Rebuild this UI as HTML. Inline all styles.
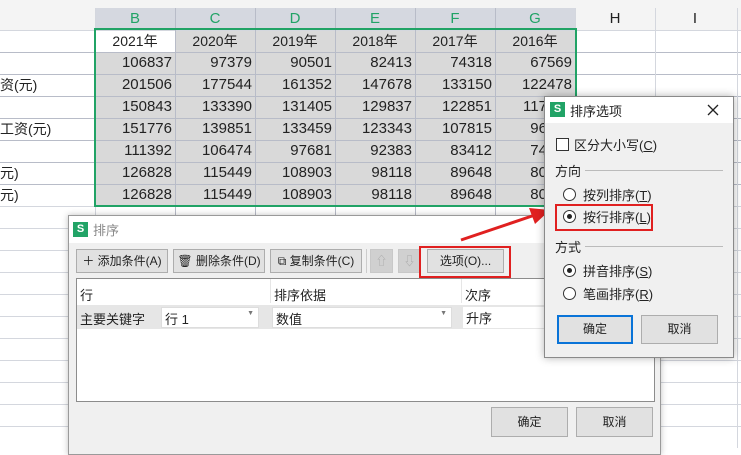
<!DOCTYPE html>
<html><head><meta charset="utf-8"><style>
*{box-sizing:border-box;margin:0;padding:0}
body{width:741px;height:447px;overflow:hidden;background:#fff;position:relative;font-family:"Liberation Sans","Noto Sans CJK SC",sans-serif;font-size:13px;color:#222}
.a{position:absolute}
.hl{position:absolute;height:1px;background:#d4d7de}
.vl{position:absolute;width:1px;background:#d4d7de}
.cell{position:absolute;height:22px;line-height:22px;font-size:15px;text-align:right;padding-right:3px;color:#222}
.btn{position:absolute;background:#e1e1e1;border:1px solid #adadad;text-align:center;font-size:12px}
.rad{position:absolute;width:13px;height:13px;border:1px solid #333;border-radius:50%;background:#fff}
.rad.on::after{content:"";position:absolute;left:3px;top:3px;width:5px;height:5px;border-radius:50%;background:#222}
</style></head><body>
<div class="a" style="left:0;top:0;width:741px;height:8px;background:#f4f4f4"></div>
<div class="a" style="left:0;top:8px;width:741px;height:22px;background:#f4f4f4"></div>
<div class="a" style="left:95px;top:8px;width:480px;height:22px;background:#d5d8e0"></div>
<div class="a" style="left:95px;top:30px;width:480px;height:176px;background:#d9d9d9"></div>
<div class="a" style="left:95px;top:30px;width:80px;height:22px;background:#fff"></div>
<div id="grid"></div>
<script>
var g='';
for(var y=30;y<=447;y+=22)g+='<div class="hl" style="left:0;top:'+y+'px;width:741px;background:'+(y>30&&y<206?'#b8bcc8':'#d4d7de')+'"></div>';
[95,175,255,335,415,495,575,655,737].forEach(function(x){g+='<div class="vl" style="left:'+x+'px;top:8px;height:440px;background:'+(x>95&&x<575?'#b8bcc8':'#d4d7de')+'"></div>'});
var L=['B','C','D','E','F','G','H','I'];
L.forEach(function(l,i){g+='<div class="a" style="left:'+(95+i*80)+'px;top:8px;width:80px;text-align:center;line-height:22px;font-size:15px;color:'+(i<6?'#21a366':'#222')+'">'+l+'</div>'});
var yrs=['2021年','2020年','2019年','2018年','2017年','2016年'];
yrs.forEach(function(t,i){g+='<div class="a" style="left:'+(95+i*80)+'px;top:30px;width:80px;text-align:center;line-height:22px;font-size:14px">'+t+'</div>'});
var d=[[106837,97379,90501,82413,74318,67569],[201506,177544,161352,147678,133150,122478],[150843,133390,131405,129837,122851,117000],[151776,139851,133459,123343,107815,96000],[111392,106474,97681,92383,83412,74000],[126828,115449,108903,98118,89648,80000],[126828,115449,108903,98118,89648,80000]];
d.forEach(function(r,j){r.forEach(function(v,i){g+='<div class="cell" style="left:'+(95+i*80)+'px;top:'+(52+j*22)+'px;width:80px">'+v+'</div>'})});
document.getElementById('grid').innerHTML=g;
</script>
<div class="a" style="left:0;top:74px;line-height:22px;font-size:14px">资(元)</div>
<div class="a" style="left:0;top:118px;line-height:22px;font-size:14px">工资(元)</div>
<div class="a" style="left:0;top:162px;line-height:22px;font-size:14px">元)</div>
<div class="a" style="left:0;top:184px;line-height:22px;font-size:14px">元)</div>
<div class="a" style="left:94px;top:28px;width:483px;height:179px;border:2px solid #21a366"></div>

<!-- sort dialog -->
<div class="a" style="left:68px;top:215px;width:593px;height:240px;background:#f0f0f0;border:1px solid #9a9a9a;box-shadow:0 0 6px rgba(0,0,0,.25)">
 <div class="a" style="left:0;top:0;width:591px;height:27px;background:#fff"></div>
 <div class="a" style="left:4px;top:6px;width:15px;height:15px;background:#21a366;color:#fff;font-size:11px;text-align:center;line-height:15px;font-weight:bold">S</div>
 <div class="a" style="left:24px;top:4px;font-size:13px;color:#888">排序</div>
 <div class="btn" style="left:7px;top:33px;width:92px;height:24px;line-height:22px">＋ 添加条件(A)</div>
 <div class="btn" style="left:104px;top:33px;width:92px;height:24px;line-height:22px">🗑 删除条件(D)</div>
 <div class="btn" style="left:201px;top:33px;width:92px;height:24px;line-height:22px">⧉ 复制条件(C)</div>
 <div class="a" style="left:297px;top:33px;width:1px;height:24px;background:#ccc"></div>
 <div class="btn" style="left:301px;top:33px;width:23px;height:24px;background:#d0d0d0;border-color:#c8c8c8;color:#aaa;line-height:22px">⇧</div>
 <div class="btn" style="left:329px;top:33px;width:23px;height:24px;background:#d0d0d0;border-color:#c8c8c8;color:#aaa;line-height:22px">⇩</div>
 <div class="btn" style="left:358px;top:33px;width:77px;height:24px;line-height:22px">选项(O)...</div>
 <div class="a" style="left:350px;top:30px;width:92px;height:32px;border:2px solid #e02020"></div>
 <div class="a" style="left:7px;top:62px;width:579px;height:124px;background:#fff;border:1px solid #8c8c8c">
  <div class="a" style="left:3px;top:6px">行</div>
  <div class="a" style="left:193px;top:0;width:1px;height:24px;background:#e6e6e6"></div>
  <div class="a" style="left:197px;top:6px">排序依据</div>
  <div class="a" style="left:384px;top:0;width:1px;height:24px;background:#e6e6e6"></div>
  <div class="a" style="left:388px;top:6px">次序</div>
  <div class="a" style="left:0;top:26px;width:577px;height:24px;background:#e6e6e6"></div>
  <div class="a" style="left:3px;top:30px">主要关键字</div>
  <div class="a" style="left:84px;top:28px;width:98px;height:21px;background:#fff;border:1px solid #ddd;padding:1px 3px">行 1<span style="position:absolute;right:4px;top:2px;font-size:7px;color:#777">▼</span></div>
  <div class="a" style="left:195px;top:28px;width:180px;height:21px;background:#fff;border:1px solid #ddd;padding:1px 3px">数值<span style="position:absolute;right:4px;top:2px;font-size:7px;color:#777">▼</span></div>
  <div class="a" style="left:386px;top:28px;width:191px;height:21px;background:#fff;padding:1px 3px">升序</div>
 </div>
 <div class="btn" style="left:422px;top:191px;width:77px;height:30px;line-height:28px">确定</div>
 <div class="btn" style="left:507px;top:191px;width:77px;height:30px;line-height:28px">取消</div>
</div>

<!-- arrow -->
<svg class="a" style="left:455px;top:200px" width="100" height="50"><line x1="6" y1="40" x2="80" y2="15" stroke="#e02020" stroke-width="3"/><polygon points="95,10 74,8 80,24" fill="#e02020"/></svg>

<!-- options dialog -->
<div class="a" style="left:544px;top:96px;width:190px;height:262px;background:#f0f0f0;border:1px solid #8a8a8a;box-shadow:0 0 8px rgba(0,0,0,.3)">
 <div class="a" style="left:0;top:0;width:188px;height:26px;background:#fff"></div>
 <div class="a" style="left:5px;top:5px;width:15px;height:15px;background:#21a366;color:#fff;font-size:11px;text-align:center;line-height:15px;font-weight:bold">S</div>
 <div class="a" style="left:25px;top:4px">排序选项</div>
 <svg class="a" style="left:162px;top:7px" width="12" height="12"><path d="M1 1L11 11M11 1L1 11" stroke="#222" stroke-width="1.3"/></svg>
 <div class="a" style="left:11px;top:41px;width:13px;height:13px;border:1px solid #333;background:#fff"></div>
 <div class="a" style="left:29px;top:38px">区分大小写(<u>C</u>)</div>
 <div class="a" style="left:10px;top:64px">方向</div>
 <div class="a" style="left:40px;top:73px;width:138px;height:1px;background:#bbb"></div>
 <div class="rad" style="left:18px;top:91px"></div>
 <div class="a" style="left:38px;top:88px">按列排序(<u>T</u>)</div>
 <div class="rad on" style="left:18px;top:113px"></div>
 <div class="a" style="left:38px;top:110px">按行排序(<u>L</u>)</div>
 <div class="a" style="left:10px;top:107px;width:98px;height:27px;border:2px solid #e02020"></div>
 <div class="a" style="left:10px;top:140px">方式</div>
 <div class="a" style="left:40px;top:149px;width:138px;height:1px;background:#bbb"></div>
 <div class="rad on" style="left:18px;top:167px"></div>
 <div class="a" style="left:38px;top:164px">拼音排序(<u>S</u>)</div>
 <div class="rad" style="left:18px;top:190px"></div>
 <div class="a" style="left:38px;top:187px">笔画排序(<u>R</u>)</div>
 <div class="btn" style="left:12px;top:218px;width:76px;height:29px;line-height:25px;border:2px solid #0a74d8">确定</div>
 <div class="btn" style="left:96px;top:218px;width:77px;height:29px;line-height:27px">取消</div>
</div>
</body></html>
